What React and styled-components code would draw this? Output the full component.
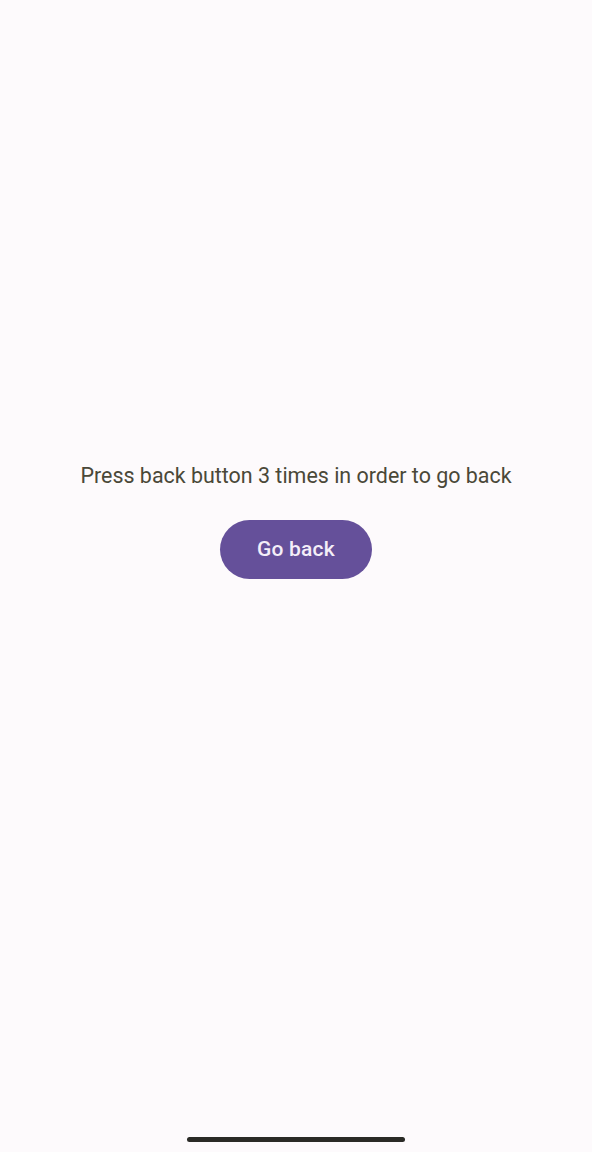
import React from "react";
import styled, { createGlobalStyle } from "styled-components";

const Global = createGlobalStyle`
  html, body { margin: 0; padding: 0; background: #fdfafc; }
  #root { min-height: 100vh; }
`;

const Screen = styled.div`
  width: 592px;
  height: 1152px;
  background: #fdfafc;
  display: flex;
  flex-direction: column;
  font-family: Roboto, "Noto Sans", sans-serif;
`;

const Center = styled.main`
  flex: 1;
  display: flex;
  flex-direction: column;
  align-items: center;
  justify-content: center;
  gap: 31px;
  padding-bottom: 96px;
`;

const Message = styled.p`
  margin: 0;
  font-size: 21.45px;
  line-height: 26px;
  color: #4a4838;
`;

const Button = styled.button`
  width: 152px;
  height: 59px;
  border-radius: 30px;
  border: none;
  background: #65509a;
  color: #f4eef8;
  font-family: Roboto, "Noto Sans", sans-serif;
  font-weight: 500;
  font-size: 21px;
  letter-spacing: 0.2px;
  cursor: pointer;
`;

const HomeBar = styled.div`
  display: flex;
  justify-content: center;
  padding-bottom: 10px;
`;

const Indicator = styled.div`
  width: 218px;
  height: 5px;
  border-radius: 3px;
  background: #2a2a26;
`;

export default function App() {
  return (
    <Screen>
      <Global />
      <Center>
        <Message>Press back button 3 times in order to go back</Message>
        <Button>Go back</Button>
      </Center>
      <HomeBar>
        <Indicator />
      </HomeBar>
    </Screen>
  );
}
